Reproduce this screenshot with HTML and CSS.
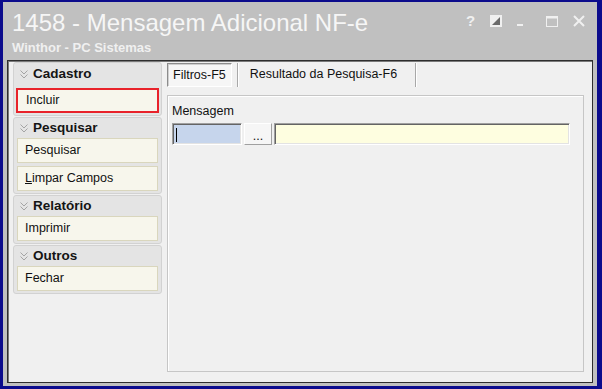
FILE: index.html
```html
<!DOCTYPE html>
<html>
<head>
    <title>1458 - Mensagem Adicional NF-e</title>
    <link rel="stylesheet" href="styles.css">
</head>
<body>
    <div class="window">
        <div class="titlebar">
            <div class="titles">
                <div class="title">1458 - Mensagem Adicional NF-e</div>
                <div class="subtitle">Winthor - PC Sistemas</div>
            </div>
            <svg class="controls" width="126" height="18" viewBox="0 0 126 18">
                <text x="3" y="13" class="help">?</text>
                <rect x="27.5" y="2.5" width="11" height="11" fill="#f0f0f0" stroke="#f0f0f0"/>
                <polygon points="29,12 37,4 37,12" fill="#6a6a6a"/>
                <rect x="54" y="11" width="6" height="2" fill="#f0f0f0"/>
                <rect x="83.5" y="3.5" width="11" height="10" fill="none" stroke="#f0f0f0"/>
                <rect x="83" y="3" width="12" height="2.5" fill="#f0f0f0"/>
                <path d="M111 3 L121 13 M121 3 L111 13" stroke="#f0f0f0" stroke-width="2"/>
            </svg>
        </div>

        <div class="client">
            <div class="sidebar">
                <div class="group first">
                    <div class="group-head"><svg class="chev" width="8" height="9" viewBox="0 0 8 9"><path d="M0.5 0.5 L4 4 L7.5 0.5 M0.5 4.5 L4 8 L7.5 4.5" fill="none" stroke="#a4a4a4"/></svg>Cadastro</div>
                    <div class="btn selected">Incluir</div>
                </div>
                <div class="group">
                    <div class="group-head"><svg class="chev" width="8" height="9" viewBox="0 0 8 9"><path d="M0.5 0.5 L4 4 L7.5 0.5 M0.5 4.5 L4 8 L7.5 4.5" fill="none" stroke="#a4a4a4"/></svg>Pesquisar</div>
                    <div class="btn">Pesquisar</div>
                    <div class="btn"><u>L</u>impar Campos</div>
                </div>
                <div class="group">
                    <div class="group-head"><svg class="chev" width="8" height="9" viewBox="0 0 8 9"><path d="M0.5 0.5 L4 4 L7.5 0.5 M0.5 4.5 L4 8 L7.5 4.5" fill="none" stroke="#a4a4a4"/></svg>Relatório</div>
                    <div class="btn">Imprimir</div>
                </div>
                <div class="group">
                    <div class="group-head"><svg class="chev" width="8" height="9" viewBox="0 0 8 9"><path d="M0.5 0.5 L4 4 L7.5 0.5 M0.5 4.5 L4 8 L7.5 4.5" fill="none" stroke="#a4a4a4"/></svg>Outros</div>
                    <div class="btn">Fechar</div>
                </div>
            </div>

            <div class="main">
                <div class="tabs">
                    <div class="tab active">Filtros-F5</div>
                    <div class="tab-sep"></div>
                    <div class="tab">Resultado da Pesquisa-F6</div>
                    <div class="tab-sep"></div>
                </div>
                <div class="page">
                    <div class="label">Mensagem</div>
                    <div class="row">
                        <div class="field code"><span class="caret"></span></div>
                        <div class="dots">...</div>
                        <div class="field desc"></div>
                    </div>
                </div>
            </div>
        </div>
    </div>
</body>
</html>
```

FILE: styles.css
```css
* { box-sizing: border-box; }
body { margin: 0; padding: 2px 5px 3px 3px; height: 389px; background: #0b0b8c; font-family: "Liberation Sans", Arial, sans-serif; font-size: 12.5px; color: #000; }

.window { height: 384px; background: #c0c0c0; padding: 0 4px 3px 4px; display: flex; flex-direction: column; }
.titlebar { height: 58px; display: flex; padding: 8px 0 0 5px; }
.titles { flex: 1; }
.title { font-size: 24px; line-height: 26px; color: #f6f6f6; }
.subtitle { margin-top: 4px; font-size: 13px; line-height: 15px; font-weight: bold; color: #f0f0f0; }
.controls { margin-top: 3px; margin-right: 4px; }
.help { font-family: "Liberation Sans", Arial, sans-serif; font-size: 15px; font-weight: bold; fill: #f0f0f0; }

.client { flex: 1; display: flex; background: #f0f0f0; border: 1px solid #2e2e2e; box-shadow: inset 1px 1px #7a7a7a; padding: 1px 8px 10px 5px; }

.sidebar { width: 149px; }
.group { background: #e4e4e4; border: 1px solid #d2d2d2; border-radius: 3px; padding: 0 3px 2px 3px; margin-bottom: 1px; }
.group + .group + .group { margin-top: 1px; }
.group-head { height: 20px; line-height: 20px; display: flex; align-items: center; padding-left: 3px; font-size: 13.5px; font-weight: bold; color: #141414; }
.group.first .group-head { height: 25px; align-items: flex-start; padding-top: 1px; }
.group.first .group-head .chev { margin-top: 6px; }
.chev { margin-right: 5px; flex: none; }
.btn { height: 25px; line-height: 23px; padding-left: 7px; background: #f7f6ec; border: 1px solid #d9d6bd; color: #111; }
.btn + .btn { margin-top: 3px; }
.btn.selected { border: 2px solid #e8222a; margin: 0 -1px; padding-left: 8px; line-height: 21px; }

.main { flex: 1; margin-left: 5px; display: flex; flex-direction: column; }
.tabs { height: 25px; display: flex; padding-top: 1px; }
.tab { height: 24px; line-height: 22px; padding: 0 13px 0 11px; color: #111; }
.tab.active { padding: 0 5px; border: 1px solid; border-color: #8c8c8c #fff #fff #8c8c8c; background: #f6f6f6; box-shadow: inset 1px 1px #cfcfcf; }
.tab-sep { width: 2px; height: 24px; margin-left: 5px; border-left: 1px solid #a8a8a8; border-right: 1px solid #fff; }

.page { flex: 1; margin-top: 8px; border: 1px solid #c6c6c6; box-shadow: inset 1px 1px #fff; padding: 8px 13px 0 4px; }
.label { line-height: 15px; color: #111; }
.row { display: flex; height: 22px; margin-top: 4px; gap: 2px; }
.field { height: 22px; border: 1px solid; border-color: #a0a0a0 #fff #fff #a0a0a0; box-shadow: inset 1px 1px #646464, inset -1px -1px #e3e3e3; }
.code { width: 70px; background: #c6d5ec; padding: 4px 0 0 3px; }
.caret { display: block; width: 1px; height: 14px; background: #000; }
.dots { width: 28px; height: 22px; background: #f6f6f6; border: 1px solid; border-color: #fff #a0a0a0 #a0a0a0 #fff; text-align: center; line-height: 24px; color: #111; }
.desc { flex: 1; background: #fefee0; }
```
